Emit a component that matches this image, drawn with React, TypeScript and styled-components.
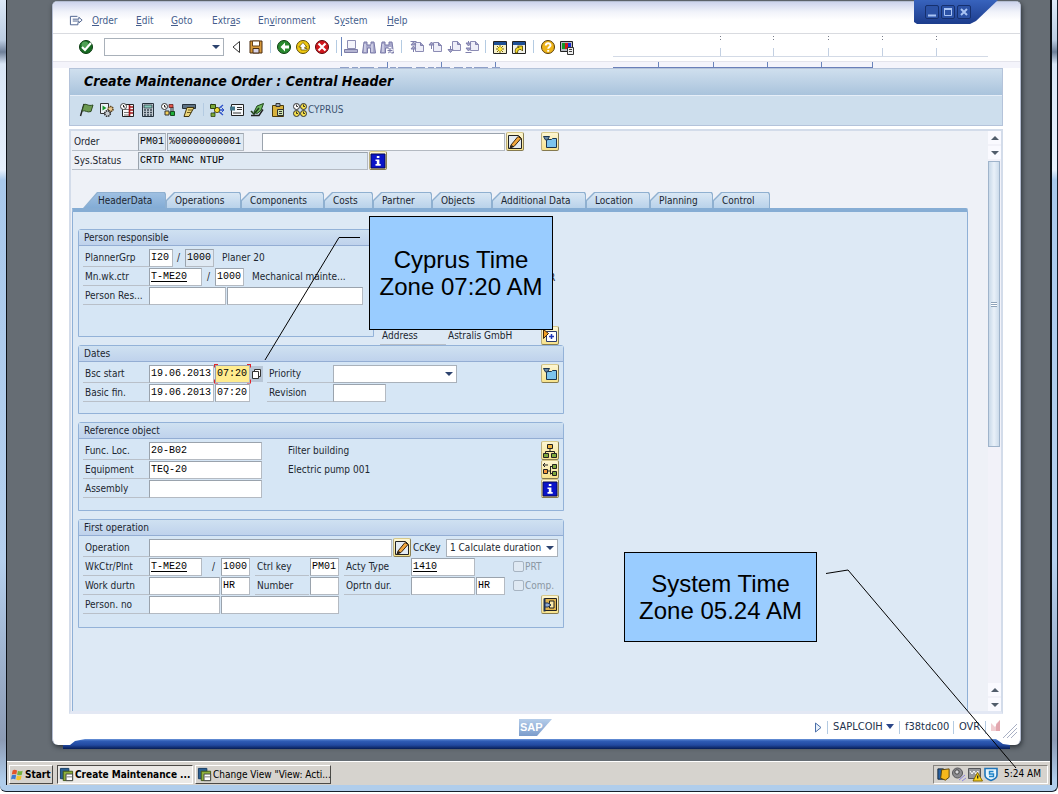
import React from "react";
import styled, { createGlobalStyle, css } from "styled-components";

const UI = '"DejaVu Sans Condensed", "DejaVu Sans", Tahoma, sans-serif';
const MONO = '"Liberation Mono", "Courier New", monospace';

const Global = createGlobalStyle`
  * { box-sizing: border-box; }
  html { background: #fff; }
  body { margin: 0; font-family: ${UI}; font-size: 10px; line-height: 14px; color: #1c2630; }
  button, input, select { font: inherit; color: inherit; margin: 0; border-radius: 0; }
  button { padding: 0; border: 0; background: none; }
  svg { display: block; }
`;

/* ---------- desktop and window frame ---------- */

const Frame = styled.div`
  position: relative;
  display: flex;
  flex-direction: column;
  min-height: calc(100vh - 2px);
  border: solid #16202c;
  border-width: 0 1px 1px 0;
  border-radius: 0 0 6px 6px;
  padding: 0 5px 6px 6px;
  background: linear-gradient(#dce9f8 0, #bccde2 40px, #6e7f98 52px, #d9e6f6 64px, #e6f0fc 170px, #a9c9ec 180px, #b5d0ee 560px, #8c9bb4 740px, #b0cdeb 780px);
`;

const Desktop = styled.div`
  flex: 1;
  display: flex;
  flex-direction: column;
  border: solid #0b1016;
  border-width: 0 2px 0 1px;
  background: #666d74;
`;

const Win = styled.main`
  flex: 1;
  display: flex;
  flex-direction: column;
  position: relative;
  margin: 1px 29px 0 45px;
  padding-bottom: 6px;
  background: #fff;
  border: solid #b4bdd2;
  border-width: 1px 1px 0;
  border-radius: 5px 5px 6px 6px;
  box-shadow: 1px 2px 5px rgba(20, 26, 32, 0.7);
`;

const BlueEdge = styled.div`
  position: relative;
  height: 10px;
  margin: -6px 40px 12px 56px;
  background: linear-gradient(#6d97da 0, #2f5cb6 2px, #2249a0 6px, #071d55 10px);
  clip-path: polygon(0 100%, 0 6px, 7px 6px, 12px 2px, 22px 0, calc(100% - 14px) 0, calc(100% - 7px) 5px, 100% 6px, 100% 100%);
`;

const MenuBar = styled.nav`
  display: flex;
  height: 32px;
  padding: 12px 0 0 16px;
  border-bottom: 1px solid #d9dbe0;
  background: linear-gradient(#cdd3ec 0, #f1f3fa 10px, #fff 18px);
  border-radius: 4px 4px 0 0;
`;

const MenuItem = styled.button<{ $w: number }>`
  width: ${(p) => p.$w}px;
  height: 14px;
  text-align: left;
  color: #455d8c;
`;

const SystemMenu = styled.button`
  width: 23px;
  height: 14px;
`;

const Controls = styled.div`
  position: absolute;
  top: -2px;
  right: 22px;
  width: 84px;
  height: 24px;
  padding: 5px 0 0 11px;
  display: flex;
  gap: 2px;
  background: linear-gradient(#3863bd, #1c3c8c);
  clip-path: polygon(0 0, 100% 0, 62px 21px, 56px 24px, 3px 24px, 0 22px);
`;

const Control = styled.button`
  width: 14px;
  height: 14px;
  border: 1px solid #16306e;
  border-radius: 2px;
  background: #2c52a6;
  color: #a9c4f4;
`;

const Toolbar = styled.div`
  display: flex;
  align-items: center;
  height: 28px;
  padding: 0 0 2px 25px;
  border-bottom: 1px solid #e4e4ec;
`;

const Tool = styled.button<{ $ml?: number }>`
  flex: none;
  width: 16px;
  height: 16px;
  margin-left: ${(p) => p.$ml ?? 2}px;
`;

const Sep = styled.i<{ $ml?: number; $strong?: boolean }>`
  flex: none;
  width: 1px;
  height: ${(p) => (p.$strong ? 19 : 13)}px;
  margin-left: ${(p) => p.$ml ?? 7}px;
  background: ${(p) => (p.$strong ? "#6a84bb" : "#b4cbe2")};
`;

const Ruler = styled.div`
  flex: 1;
  min-width: 0;
  height: 25px;
  margin-left: 8px;
  overflow: hidden;
`;

const Ticks = styled.div`
  height: 6px;
  background: #f4f4fb;
  overflow: hidden;
`;

const Banner = styled.header`
  margin: 0 17px 0 16px;
  border: 1px solid #b4c3da;
  background: #cddeed;
`;

const Title = styled.h1`
  margin: 0;
  height: 27px;
  padding: 3px 0 0 14px;
  border-bottom: 1px solid #e6eef8;
  background: linear-gradient(#cfdfee, #a9c3dc);
  color: #000;
  font-size: 14px;
  line-height: 18px;
  font-weight: bold;
  font-style: italic;
`;

const AppBar = styled.div`
  display: flex;
  align-items: center;
  height: 29px;
  padding: 0 0 2px 6px;
  color: #3d5472;
`;

const Cyprus = styled.button`
  display: flex;
  align-items: center;
  margin-left: 6px;
  height: 16px;
`;

const Content = styled.section`
  flex: 1;
  display: flex;
  margin: 3px 17px 0 16px;
  border: 2px solid #d3dcea;
  border-bottom-width: 3px;
  border-bottom-color: #e3e8f4;
  background: #eef1f7;
`;

const Form = styled.form`
  flex: 1;
  min-width: 0;
  display: flex;
  flex-direction: column;
  padding: 1px 20px 0 1px;
`;

const TabStrip = styled.div`
  display: flex;
  height: 16px;
  margin: 22px 0 0 11px;
`;

const Tab = styled.button<{ $w: number; $on?: boolean }>`
  position: relative;
  width: ${(p) => p.$w}px;
  height: 16px;
  padding: 2px 0 0 ${(p) => (p.$on ? 15 : 9)}px;
  text-align: left;
  white-space: nowrap;
  background: #8fb0d0;
  --shape: ${(p) =>
    p.$on
      ? "polygon(0 100%, 14px 0, calc(100% - 1px) 0, 100% 2px, 100% 100%)"
      : "polygon(0 100%, 0 8px, 8px 0, calc(100% - 1px) 0, 100% 2px, 100% 100%)"};
  clip-path: var(--shape);
  &::before {
    content: "";
    position: absolute;
    inset: 1px 1px 0 1px;
    clip-path: var(--shape);
    background: ${(p) => (p.$on ? "linear-gradient(#9fc0e2, #83acd5)" : "linear-gradient(#d9e7f4, #b9d2ea)")};
  }
  span { position: relative; }
`;

const TabPage = styled.div`
  flex: 1;
  padding: 17px 6px 0 5px;
  border: solid #8fb0d6;
  border-width: 4px 1px 0;
  border-top-color: #86add4;
  border-radius: 0 2px 0 0;
  background: #dde9f5;
`;

const Groups = styled.div`
  display: flex;
  flex-direction: column;
  gap: 8px;
  width: 486px;
`;

const Split = styled.div`
  display: flex;
`;

/* The address line runs on below the group beside it, down to the next group. */
const Aside = styled.div`
  flex: 1;
  display: flex;
  flex-direction: column;
  justify-content: flex-end;
  gap: 39px;
  margin-bottom: -8px;
  padding-right: 5px;
`;

const Group = styled.fieldset<{ $w?: number }>`
  width: ${(p) => (p.$w ? p.$w + "px" : "100%")};
  min-width: 0;
  margin: 0;
  padding: 0;
  border: 1px solid #93b2d8;
  border-radius: 3px 3px 0 0;
  background: #d6e6f5;
`;

const GroupTitle = styled.h2`
  margin: 0;
  height: 16px;
  padding-left: 5px;
  border-bottom: 1px solid #93add3;
  background: linear-gradient(#cfe1f1, #bfd2ec);
  font-size: 10px;
  line-height: 15px;
  font-weight: normal;
`;

const GroupBody = styled.div<{ $bottom: number }>`
  padding: 2px 4px ${(p) => p.$bottom}px;
`;

const Row = styled.div`
  display: flex;
  align-items: center;
  height: 19px;
`;

const Label = styled.label<{ $w: number; $ml?: number; $plain?: boolean }>`
  flex: none;
  width: ${(p) => p.$w}px;
  height: 18px;
  margin-left: ${(p) => p.$ml ?? 0}px;
  padding: 2px 0 0 2px;
  white-space: nowrap;
  border-bottom: 1px solid ${(p) => (p.$plain ? "transparent" : "#b9c0c9")};
`;

const Text = styled.span<{ $ml?: number; $w?: number }>`
  margin-left: ${(p) => p.$ml ?? 0}px;
  ${(p) => p.$w && css`width: ${p.$w}px;`}
  white-space: nowrap;
`;

const Field = styled.input<{ $w: number; $ml?: number; $tone?: "off" | "focus"; $link?: boolean }>`
  flex: none;
  width: ${(p) => p.$w}px;
  height: 18px;
  margin-left: ${(p) => p.$ml ?? 0}px;
  padding: 0 0 0 1px;
  border: 1px solid;
  border-color: #9aa3ad #b4bac2 #b4bac2 #9aa3ad;
  outline: 0;
  font-family: ${MONO};
  color: #000;
  background: ${(p) => (p.$tone === "off" ? "#dfe9f3" : p.$tone === "focus" ? "#ffec8f" : "#fff")};
  text-decoration: ${(p) => (p.$link ? "underline" : "none")};
  text-underline-offset: 2px;
`;

const FocusMark = styled.span`
  position: relative;
  display: flex;
  margin-left: 1px;
  &::before {
    content: "";
    position: absolute;
    inset: -1px;
    border: 1px solid #e0262c;
    clip-path: polygon(0 0, 4px 0, 4px 100%, 0 100%, 0 calc(100% - 4px), 100% calc(100% - 4px), 100% 100%, calc(100% - 4px) 100%, calc(100% - 4px) 0, 100% 0, 100% 4px, 0 4px);
  }
`;

const MatchCode = styled.button`
  width: 13px;
  height: 16px;
  background: #b8c6d6;
`;

const Picker = styled.span<{ $w: number; $ml?: number }>`
  position: relative;
  flex: none;
  width: ${(p) => p.$w}px;
  margin-left: ${(p) => p.$ml ?? 0}px;
  &::after {
    content: "";
    position: absolute;
    right: 4px;
    top: 7px;
    border: 4px solid transparent;
    border-top-color: #2c426e;
    border-bottom: 0;
    pointer-events: none;
  }
  select {
    display: block;
    appearance: none;
    width: 100%;
    height: 18px;
    padding: 0 0 0 3px;
    border: 1px solid #a9b1ba;
    background: #fff;
    outline: 0;
  }
`;

const Push = styled.button<{ $ml?: number; $end?: boolean }>`
  flex: none;
  display: flex;
  align-items: center;
  justify-content: center;
  width: 18px;
  height: 19px;
  margin-left: ${(p) => (p.$end ? "auto" : (p.$ml ?? 1) + "px")};
  border: 1px solid;
  border-color: #d8c98a #8c8154 #857a4e #b9ad7c;
  border-radius: 2px;
  background: linear-gradient(#fdf6d2, #f7e38c);
`;

const Check = styled.label`
  display: flex;
  align-items: center;
  gap: 1px;
  width: 46px;
  margin-left: auto;
  color: #8b97a3;
  input {
    appearance: none;
    width: 11px;
    height: 11px;
    border: 1px solid #a7b4c2;
    border-radius: 2px;
    background: #dfe9f3;
  }
`;

const Scroll = styled.div`
  flex: none;
  display: flex;
  flex-direction: column;
  gap: 2px;
  width: 13px;
  background: #f2f2f9;
`;

const Arrow = styled.button<{ $up?: boolean }>`
  display: flex;
  align-items: center;
  justify-content: center;
  height: 13px;
  background: #fafaff;
  &::before {
    content: "";
    border: 4px solid transparent;
    ${(p) => (p.$up ? "border-bottom-color: #515d6b; border-top: 0;" : "border-top-color: #515d6b; border-bottom: 0;")}
  }
`;

const Track = styled.div`
  flex: 1;
`;

const Thumb = styled.div`
  display: flex;
  align-items: center;
  justify-content: center;
  width: 12px;
  height: 55%;
  border: 1px solid #9fb4cb;
  background: linear-gradient(90deg, #c8d9e9, #e9f1f9, #cddceb);
  &::before {
    content: "";
    width: 6px;
    height: 5px;
    background: repeating-linear-gradient(#8ea3ba 0 1px, #fff 1px 2px);
  }
`;

const Status = styled.footer`
  display: flex;
  align-items: center;
  height: 25px;
  padding: 1px 2px 0 0;
  font-size: 11px;
  color: #22324c;
`;

const StatusText = styled.span<{ $w: number }>`
  width: ${(p) => p.$w}px;
  margin-left: 5px;
  white-space: nowrap;
`;

const Logo = styled.span`
  flex: 1;
  padding-left: 466px;
`;

/* ---------- task bar ---------- */

const TaskBar = styled.div`
  display: flex;
  align-items: center;
  height: 24px;
  padding: 2px 2px 1px;
  border-top: 1px solid #fff;
  background: #d6d3ce;
  color: #000;
`;

const Task = styled.button<{ $w: number; $ml?: number; $down?: boolean }>`
  display: flex;
  align-items: center;
  flex: none;
  gap: 1px;
  width: ${(p) => p.$w}px;
  height: 19px;
  margin-left: ${(p) => p.$ml ?? 0}px;
  padding: 1px 0 0 1px;
  white-space: nowrap;
  border: 1px solid;
  border-color: ${(p) => (p.$down ? "#4c4a47 #fff #fff #4c4a47" : "#fff #4c4a47 #4c4a47 #fff")};
  background: ${(p) => (p.$down ? "#ebe9e6" : "#d6d3ce")};
  svg { flex: none; }
`;

const Tray = styled.div`
  display: flex;
  align-items: center;
  width: 115px;
  height: 19px;
  margin-left: auto;
  padding-left: 2px;
  border: 1px solid;
  border-color: #87847f #fff #fff #87847f;
`;

/* ---------- annotations laid over the desktop ---------- */

const Note = styled.aside<{ $x: number; $y: number; $w: number; $h: number }>`
  position: absolute;
  left: ${(p) => p.$x}px;
  top: ${(p) => p.$y}px;
  width: ${(p) => p.$w}px;
  height: ${(p) => p.$h}px;
  display: flex;
  align-items: center;
  justify-content: center;
  border: 1px solid #000;
  background: #99ccff;
  color: #000;
  font: 24px/27px "Liberation Sans", Arial, sans-serif;
  text-align: center;
`;

const Leaders = styled.svg`
  position: absolute;
  left: 0;
  top: 0;
  pointer-events: none;
`;

/* ---------- icons ---------- */

const art: Record<string, React.ReactNode> = {
  menu: <><path d="M9 2.500H1.500v9h8V9" fill="none" stroke="#4a5f8c" /><path d="M4 5.500h6.500v-2L14 6.500l-3.500 3v-2H4" fill="#fff" stroke="#4a5f8c" /></>,
  ok: <><circle cx="8" cy="8" r="6.500" fill="#176b22" stroke="#0a3a10" /><circle cx="7" cy="6" r="3.500" fill="#4fa055" /><path d="M4 8l3 3 6-7" fill="none" stroke="#fff" strokeWidth="2.200" /></>,
  save: <><path d="M2 2h12v12H2z" fill="#d99a3a" stroke="#4a2c10" /><path d="M4.500 2v5h7V2z" fill="#fff" stroke="#6b4218" /><path d="M5 9.500h6V14H5z" fill="#d8d4e8" stroke="#4a2c10" /></>,
  back: <><circle cx="8" cy="8" r="6.500" fill="#2a8a2f" stroke="#0b3c10" /><path d="M9 3.500L4.500 8 9 12.500V9.500h4v-3H9z" fill="#fff" /></>,
  exit: <><circle cx="8" cy="8" r="6.500" fill="#f0c810" stroke="#5c4a04" /><path d="M8 3.500L3.800 8H6v3h6V9.500H9.800V8h2z" fill="#fff" stroke="#6b5806" strokeWidth=".8" /></>,
  cancel: <><circle cx="8" cy="8" r="6.500" fill="#d0161c" stroke="#5c0609" /><path d="M4.500 4.500l7 7M11.500 4.500l-7 7" stroke="#fff" strokeWidth="2.200" /></>,
  print: <><path d="M4.500 1.500h8v8h-8z" fill="#f4f4fb" stroke="#8f8fb4" /><path d="M1.500 10.500h13v3h-13z" fill="#b4b4d2" stroke="#7d7da6" /></>,
  find: <><path d="M3 3h3v3h4V3h3l1.500 11H9.500v-5h-3v5h-5z" fill="#a9a9cc" stroke="#7a7aa8" /><path d="M4 5v8M11 5v8" stroke="#ececf8" /></>,
  findNext: <><path d="M3 3h3v3h4V3h3l1.500 11H9.500v-5h-3v5h-5z" fill="#a9a9cc" stroke="#7a7aa8" /><path d="M4 5v8" stroke="#ececf8" /><path d="M11 8v7M7.500 11.500h7" stroke="#fff" strokeWidth="2.600" /><path d="M11 9v5M8.500 11.500h5" stroke="#7a7aa8" strokeWidth="1.200" /></>,
  first: <><path d="M6.500 3.500h5l3 3v6h-8z" fill="#eeeef8" stroke="#8c8cb4" /><path d="M11.500 3.500v3h3M1.500 2.500h6M4.500 3L2 6h5zM4.500 7L2 10h5zM4.500 10v3" fill="#a4a4c8" stroke="#7f7fac" /></>,
  up: <><path d="M6.500 3.500h5l3 3v6h-8z" fill="#eeeef8" stroke="#8c8cb4" /><path d="M11.500 3.500v3h3M4.500 3L2 6h5zM4.500 6v4" fill="#a4a4c8" stroke="#7f7fac" /></>,
  down: <><path d="M6.500 2.500h5l3 3v6h-8z" fill="#eeeef8" stroke="#8c8cb4" /><path d="M11.500 2.500v3h3M4.500 13.500L2 10.500h5zM4.500 7v4" fill="#a4a4c8" stroke="#7f7fac" /></>,
  last: <><path d="M6.500 2.500h5l3 3v6h-8z" fill="#eeeef8" stroke="#8c8cb4" /><path d="M11.500 2.500v3h3M1.500 13.500h6M4.500 7L2 4h5zM4.500 12L2 9h5zM4.500 2v2" fill="#a4a4c8" stroke="#7f7fac" /></>,
  session: <><path d="M1.500 2.500h13v12h-13z" fill="#f5f0c8" stroke="#222" /><path d="M2 3h12v3H2z" fill="#1d4f96" /><path d="M8 6v8M4 10h8M5 7l6 6M11 7l-6 6" stroke="#7a6400" /><circle cx="8" cy="10" r="2" fill="#ffe92e" /></>,
  shortcut: <><path d="M1.500 2.500h13v12h-13z" fill="#f1f1ea" stroke="#222" /><path d="M2 3h12v3H2z" fill="#1d4f96" /><path d="M4.500 14c-1-4 1-6 3.500-5.500L6.500 7h5v5l-1.500-1.500C8 10 6.500 11 6.500 14z" fill="#f6dc20" stroke="#4a3c00" strokeWidth=".8" /></>,
  help: <><circle cx="8" cy="8" r="6.500" fill="#eeb41a" stroke="#5a3d06" /><path d="M5.800 6.500C5.800 3.500 10.500 3.500 10.500 6.200 10.500 8 8.200 8 8.200 9.800M8.200 11v1.800" fill="none" stroke="#fff" strokeWidth="2" /></>,
  layout: <><path d="M1.500 2.500h12v10h-12z" fill="#b8bcc4" stroke="#222" /><path d="M3 4h3v6H3z" fill="#119a26" /><path d="M6 4h3v6H6z" fill="#d01818" /><path d="M9 4h3v6H9z" fill="#1a2fd0" /><path d="M8.500 8.500h6v7h-6z" fill="#eee" stroke="#333" /><path d="M10 10.500h3M10 12.500h3" stroke="#444" /></>,
  flag: <><path d="M5 2L1.500 14" stroke="#222" strokeWidth="1.400" /><path d="M5 2.500c3-1 4 2 9 .5l-2 6.500c-4 1.500-5-1.500-9-.5z" fill="#6c9a52" stroke="#2e4c22" /></>,
  gears: <><path d="M1.500 1.500h8v10h-8z" fill="#eef2f6" stroke="#333" /><path d="M3.500 3.500l4 2.500-4 2.500z" fill="#189a2c" /><circle cx="11.500" cy="7" r="2.500" fill="#e8c890" stroke="#5c4420" strokeDasharray="1.500 .7" strokeWidth="1.600" /><circle cx="8.500" cy="11.500" r="2.800" fill="#c9cdd2" stroke="#333" strokeDasharray="1.500 .7" strokeWidth="1.600" /></>,
  schedule: <><path d="M3.500 2.500h11v12h-11z" fill="#f8f8f8" stroke="#222" /><path d="M5 7.500h5M5 10.500h5M5 13h5" stroke="#777" /><path d="M10.500 3v11M11 5h3M11 8h3M11 11h3" stroke="#a01418" strokeWidth="1.600" /><circle cx="4.500" cy="4.500" r="3" fill="#fff" stroke="#444" /><path d="M4.500 3v2H6" fill="none" stroke="#222" /></>,
  calc: <><path d="M2.500 1.500h11v13h-11z" fill="#c3ccd4" stroke="#26323c" /><path d="M4 3h8v3H4z" fill="#86c8b8" stroke="#26323c" strokeWidth=".7" /><path d="M4 8h8M4 10.500h8M4 13h8" stroke="#3c4854" strokeWidth="1.500" strokeDasharray="2 1" /></>,
  network: <><circle cx="4.500" cy="4.500" r="3" fill="#fff" stroke="#333" /><path d="M4.500 3v2H6" fill="none" stroke="#222" /><path d="M5 9h4v4H5z" fill="#f2cf5a" stroke="#333" /><path d="M9 11h2V5h2v4" fill="none" stroke="#333" /><path d="M10.500 9.500h4v4h-4z" fill="#1eae3a" stroke="#164c20" /><path d="M9 2.500h4v3H9z" fill="#e4574c" stroke="#5a1410" strokeWidth=".7" /></>,
  material: <><path d="M1.500 2.500h13v4h-13z" fill="#5d7284" stroke="#26323c" /><path d="M6 5.500h7l-5 9H3z" fill="#ecd57a" stroke="#3f3410" /><path d="M7 8h4M6 10.500h4" stroke="#6b5a1c" /></>,
  spread: <><path d="M2 2l5 4M14 3L8 8M14 13L8 8M3 13l5-5M8 8h7" stroke="#2c50c8" strokeWidth="1.300" /><path d="M12.500 5.500l2.500 2.500-2.500 2.500" fill="none" stroke="#2c50c8" /><circle cx="8" cy="8" r="2.600" fill="#eedc3a" stroke="#5c5208" /><path d="M1.500 2.500h5v4h-5z" fill="#7aa838" stroke="#2e4410" /><path d="M2 11h4v3.500H2z" fill="#7aa838" stroke="#2e4410" strokeWidth=".8" /></>,
  text: <><path d="M2.500 2.500h12v11h-12z" fill="#f6f8fa" stroke="#222" /><path d="M8 5.500h5M8 7.500h5M4 11h8" stroke="#333" /><path d="M1 4.500h5v4H1z" fill="#3f7488" /></>,
  release: <><path d="M2 13.500h8l4-6" fill="none" stroke="#222" strokeWidth="1.400" /><path d="M5 10l3-6 6.500-2.500-2.500 7-4 3z" fill="#6fb860" stroke="#1c4416" /><path d="M2 9l3 3 5-6" fill="none" stroke="#1f3f18" strokeWidth="1.600" /></>,
  clip: <><path d="M2.500 3.500h11v11h-11z" fill="#d8b23c" stroke="#4a3a0a" /><path d="M6 1.500h4v3H6z" fill="#9aa6b0" stroke="#333" /><path d="M7.500 7.500h6v6h-6z" fill="#cfe4b0" stroke="#333" /><path d="M9 9.500h3M9 11.500h3" stroke="#333" /></>,
  clocks: <>{[[4.5, 4.5], [11.5, 4.5], [4.5, 11.5], [11.5, 11.5]].map(([x, y], i) => <g key={i}><circle cx={x} cy={y} r="3" fill={i ? "#f6e04a" : "#fff"} stroke="#333" /><path d={`M${x} ${y - 2}v2h1.500`} fill="none" stroke="#222" strokeWidth=".9" /></g>)}</>,
  edit: <><path d="M1.500 1.500h10l3 3v10h-13z" fill="#e3ebf2" stroke="#222" /><path d="M4 11L11 2.500l3 2L7 12.500l-4 1.500z" fill="#f0a63c" stroke="#3c2508" /><path d="M3 14l1.500-3L7 12.500z" fill="#222" /></>,
  detail: <><path d="M4.500 5.500h5l1-1h4v9h-10z" fill="#7cc4ee" stroke="#1c3550" /><path d="M1.500 2.500h6L5.500 6h-2z" fill="#6b8aa8" stroke="#1c3550" /></>,
  info: <><path d="M1 1h14v14H1z" fill="#0b14c8" stroke="#05085c" /><path d="M6.800 3h2.600v2H6.800zM5.500 6.500h3.900V11h1.300v1.700H5.500V11h1.300V8H5.500z" fill="#fff" /></>,
  address: <><path d="M4.500 3.500h10v10h-10z" fill="#fff" stroke="#2c3c6c" /><path d="M9.500 6v5M7 8.500h5" stroke="#2038b8" strokeWidth="1.500" /><path d="M1.500 1.500v9l5-5z" fill="#f2a024" stroke="#402604" /></>,
  tree: <><path d="M8 6v3M3.500 11V8.500h9V11" fill="none" stroke="#222" /><path d="M5.500 1.500h5v4h-5z" fill="#f0b43c" stroke="#222" /><path d="M1.500 10.500h5v4h-5zM9.500 10.500h5v4h-5z" fill="#7da83c" stroke="#222" /></>,
  branch: <><path d="M6 9h2.500M8.500 4v8.500M8.500 4.500h2M8.500 11.500h2M1 3h5M3 1L1 3l2 2" fill="none" stroke="#222" /><path d="M1.500 7.500h4v4h-4z" fill="#f0943c" stroke="#222" /><path d="M10.500 2.500h4v4h-4zM10.500 9.500h4v4h-4z" fill="#7da83c" stroke="#222" /></>,
  person: <><path d="M2.500 1.500h12v12h-12z" fill="#e0b450" stroke="#222" /><path d="M7.500 4h4.500v7H7.500z" fill="#fbeaa8" stroke="#222" /><path d="M2.500 1.500v13" stroke="#1f3050" strokeWidth="2" /><path d="M3 6h3l3 2-3 2H3z" fill="#8fa9d4" stroke="#1f3050" /></>,
  sap: <><path d="M1.500 1.500h9v11h-9z" fill="#2b5f94" stroke="#123a62" /><path d="M4.500 4.500h10v10h-10z" fill="#8eb03c" stroke="#3f5414" /><path d="M7.500 7.500h7v7h-7z" fill="#fff" stroke="#444" /><path d="M8 10.500h6" stroke="#777" /></>,
  windows: <><path d="M2 3c2-1.500 3.500-1 5.500 0l-1 5C4.500 7 3 7 1 8z" fill="#e2552a" /><path d="M8.500 3.300c2 1 3.500 1 5.800 0l-1 5c-2 1-4 1-5.800 0z" fill="#73b13c" /><path d="M1 9c2-1 3.500-1 5.300 0l-1 5c-2-1-3.500-1-5.300 0z" fill="#3c78d0" /><path d="M7.300 9.300c2 1 3.500 1 5.800 0l-1 5c-2 1-4 1-5.800 0z" fill="#f2c42c" /></>,
  trayA: <><path d="M2 2h6v11H2z" fill="#2a62a4" stroke="#123" /><path d="M6 3l8-1v9l-4 3-5-2z" fill="#f6b81c" stroke="#5c4204" /></>,
  trayB: <><circle cx="6.500" cy="7" r="5" fill="#8c8c90" stroke="#55555a" /><circle cx="6" cy="6" r="2.200" fill="#d6d6da" stroke="#444" /><path d="M8 14l6-5M11 15l4-3" stroke="#8a84e0" /></>,
  trayC: <><path d="M1.500 2.500h12v10h-12z" fill="#96989c" stroke="#55575c" /><path d="M3 5l2 3 2-3 2 3 2-3v3" fill="none" stroke="#fff" /><path d="M10.500 6.500l5 8.500H6z" fill="#f8d41c" stroke="#8a6a00" /><path d="M10.700 9.500v3" stroke="#222" strokeWidth="1.300" /></>,
  trayD: <><path d="M2 2.500h12V9c0 3-3 4.500-6 5.500C5 13.500 2 12 2 9z" fill="#e6f4fc" stroke="#1f74b8" strokeWidth="1.600" /><path d="M10.500 5.500H6.500v2.500h4v2.500H6" fill="none" stroke="#1f84c8" strokeWidth="1.400" /></>,
};

const Icon = ({ name, size = 16 }: { name: string; size?: number }) => (
  <svg width={size} height={size} viewBox="0 0 16 16" aria-hidden="true">{art[name]}</svg>
);

const MENUS: [string, string, string, number][] = [
  ["", "O", "rder", 44], ["", "E", "dit", 35], ["", "G", "oto", 41], ["Extr", "a", "s", 46],
  ["En", "v", "ironment", 76], ["S", "y", "stem", 53], ["", "H", "elp", 40],
];

const TABS: [string, number][] = [
  ["HeaderData", 83], ["Operations", 75], ["Components", 83], ["Costs", 49], ["Partner", 59],
  ["Objects", 60], ["Additional Data", 94], ["Location", 64], ["Planning", 63], ["Control", 57],
];

export default function App() {
  return (
    <Frame>
      <Global />
      <Desktop>
        <Win>
          <MenuBar>
            <SystemMenu aria-label="Window menu"><Icon name="menu" size={15} /></SystemMenu>
            {MENUS.map(([a, key, b, w]) => (
              <MenuItem key={key + b} $w={w}>{a}<u>{key}</u>{b}</MenuItem>
            ))}
          </MenuBar>
          <Controls>
            <Control aria-label="Minimize"><svg width="12" height="12"><path d="M2 9.500h8" stroke="currentColor" strokeWidth="2" /></svg></Control>
            <Control aria-label="Maximize"><svg width="12" height="12"><path d="M2.500 3v6.500h7V3M2 3h8" fill="none" stroke="currentColor" /><path d="M2 3h8" stroke="currentColor" strokeWidth="2" /></svg></Control>
            <Control aria-label="Close"><svg width="12" height="12"><path d="M3 3l6 6M9 3L3 9" stroke="currentColor" strokeWidth="2" /></svg></Control>
          </Controls>

          <Toolbar>
            <Tool $ml={0} aria-label="Enter"><Icon name="ok" /></Tool>
            <Picker $w={120} $ml={10}><select aria-label="Command"><option /></select></Picker>
            <Tool $ml={5} aria-label="Previous"><svg width="16" height="16"><path d="M10.500 2.500v11L4 8z" fill="#fff" stroke="#333" /></svg></Tool>
            <Tool $ml={3} aria-label="Save"><Icon name="save" /></Tool>
            <Sep $ml={6} />
            <Tool $ml={5} aria-label="Back"><Icon name="back" /></Tool>
            <Tool $ml={3} aria-label="Exit"><Icon name="exit" /></Tool>
            <Tool $ml={3} aria-label="Cancel"><Icon name="cancel" /></Tool>
            <Sep $ml={6} />
            <Sep $ml={4} $strong />
            <Tool $ml={1} aria-label="Print"><Icon name="print" /></Tool>
            <Tool $ml={2} aria-label="Find"><Icon name="find" /></Tool>
            <Tool aria-label="Find next"><Icon name="findNext" /></Tool>
            <Sep $ml={6} />
            <Tool $ml={7} aria-label="First page"><Icon name="first" /></Tool>
            <Tool aria-label="Previous page"><Icon name="up" /></Tool>
            <Tool $ml={3} aria-label="Next page"><Icon name="down" /></Tool>
            <Tool aria-label="Last page"><Icon name="last" /></Tool>
            <Sep $ml={5} />
            <Tool $ml={6} aria-label="New session"><Icon name="session" /></Tool>
            <Tool $ml={3} aria-label="Create shortcut"><Icon name="shortcut" /></Tool>
            <Sep $ml={6} />
            <Tool $ml={6} aria-label="Help"><Icon name="help" /></Tool>
            <Tool $ml={3} aria-label="Layout"><Icon name="layout" /></Tool>
            <Ruler>
              <svg width="420" height="25" aria-hidden="true">
                <path d="M30 22.500h375" stroke="#d3dae6" />
                <path d="M137.500 2v4M190.500 2v4M245.500 2v4M299.500 2v4M353.500 2v4" stroke="#777b88" strokeDasharray="1 2" />
                <path d="M137.500 14v8M190.500 14v8M245.500 14v8M299.500 14v8M353.500 14v8" stroke="#c3d0e2" />
              </svg>
            </Ruler>
          </Toolbar>
          <Ticks>
            <svg width="900" height="6" aria-hidden="true">
              <path d="M334.500 0v6M388.500 0v6M442.500 0v6M605.500 0v6M660.500 0v6M714.500 0v6M768.500 0v6M819.500 0v6" stroke="#6a84bb" />
              <path d="M287 5.500h160" stroke="#8fa0c8" strokeDasharray="9 3 6 2 14 4" />
              <path d="M560 5.500h260" stroke="#6a7fb8" />
            </svg>
          </Ticks>

          <Banner>
            <Title>Create Maintenance Order : Central Header</Title>
            <AppBar>
              {["flag", "gears", "schedule", "calc", "network", "material"].map((n) => (
                <Tool key={n} $ml={n === "flag" ? 3 : n === "calc" || n === "material" ? 5 : 4} aria-label={n}><Icon name={n} /></Tool>
              ))}
              <Sep $ml={6} />
              {["spread", "text", "release", "clip"].map((n) => (
                <Tool key={n} $ml={n === "clip" ? 5 : n === "spread" ? 5 : 4} aria-label={n}><Icon name={n} /></Tool>
              ))}
              <Cyprus><Icon name="clocks" />CYPRUS</Cyprus>
            </AppBar>
          </Banner>

          <Content>
            <Form onSubmit={(e) => e.preventDefault()}>
              <Row>
                <Label $w={66} htmlFor="order">Order</Label>
                <Field id="order" $w={28} $tone="off" readOnly value="PM01" />
                <Field aria-label="Order number" $w={77} $ml={1} $tone="off" readOnly value="%00000000001" />
                <Field aria-label="Order text" $w={243} $ml={18} />
                <Push type="button" aria-label="Long text"><Icon name="edit" /></Push>
                <Push type="button" $ml={17} aria-label="Order details"><Icon name="detail" /></Push>
              </Row>
              <Row>
                <Label $w={66} htmlFor="status">Sys.Status</Label>
                <Field id="status" $w={230} $tone="off" readOnly value="CRTD MANC NTUP" />
                <Push type="button" aria-label="Status information"><Icon name="info" /></Push>
              </Row>

              <TabStrip role="tablist">
                {TABS.map(([name, w], i) => (
                  <Tab key={name} type="button" role="tab" aria-selected={i === 0} $w={w} $on={i === 0}><span>{name}</span></Tab>
                ))}
              </TabStrip>
              <TabPage>
                <Groups>
                  <Split>
                    <Group $w={296}>
                      <GroupTitle>Person responsible</GroupTitle>
                      <GroupBody $bottom={31}>
                        <Row>
                          <Label $w={66} htmlFor="planner">PlannerGrp</Label>
                          <Field id="planner" $w={24} defaultValue="I20" />
                          <Text $ml={4}>/</Text>
                          <Field aria-label="Planning plant" $w={29} $ml={5} $tone="off" readOnly value="1000" />
                          <Text $ml={8}>Planer 20</Text>
                        </Row>
                        <Row>
                          <Label $w={66} htmlFor="workctr">Mn.wk.ctr</Label>
                          <Field id="workctr" $w={53} $link defaultValue="T-ME20" />
                          <Text $ml={5}>/</Text>
                          <Field aria-label="Work center plant" $w={29} $ml={5} defaultValue="1000" />
                          <Text $ml={8}>Mechanical mainte...</Text>
                        </Row>
                        <Row>
                          <Label $w={66} htmlFor="person">Person Res...</Label>
                          <Field id="person" $w={77} />
                          <Field aria-label="Person name" $w={136} $ml={1} />
                        </Row>
                      </GroupBody>
                    </Group>
                    <Aside>
                      <Row><Text $ml={175}>R</Text></Row>
                      <Row>
                        <Label as="span" $w={66} $ml={6}>Address</Label>
                        <Text $ml={2}>Astralis GmbH</Text>
                        <Push type="button" $end aria-label="Address details"><Icon name="address" /></Push>
                      </Row>
                    </Aside>
                  </Split>

                  <Group>
                    <GroupTitle>Dates</GroupTitle>
                    <GroupBody $bottom={11}>
                      <Row>
                        <Label $w={66} htmlFor="start">Bsc start</Label>
                        <Field id="start" $w={65} defaultValue="19.06.2013" />
                        <FocusMark><Field aria-label="Start time" $w={35} $tone="focus" defaultValue="07:20" /></FocusMark>
                        <MatchCode type="button" aria-label="Choose time"><svg width="13" height="16"><path d="M4.500 5.500v-2h6v7h-2" fill="#fff" stroke="#333" /><path d="M2.500 5.500h6v7h-6z" fill="#fff" stroke="#333" /></svg></MatchCode>
                        <Label $w={66} $ml={4} htmlFor="priority">Priority</Label>
                        <Picker $w={124}><select id="priority"><option /></select></Picker>
                        <Push type="button" $end aria-label="Date details"><Icon name="detail" /></Push>
                      </Row>
                      <Row>
                        <Label $w={66} htmlFor="finish">Basic fin.</Label>
                        <Field id="finish" $w={65} defaultValue="19.06.2013" />
                        <Field aria-label="Finish time" $w={35} $ml={1} defaultValue="07:20" />
                        <Label $w={66} $ml={17} htmlFor="revision">Revision</Label>
                        <Field id="revision" $w={53} />
                      </Row>
                    </GroupBody>
                  </Group>

                  <Group>
                    <GroupTitle>Reference object</GroupTitle>
                    <GroupBody $bottom={12}>
                      <Row>
                        <Label $w={66} htmlFor="floc">Func. Loc.</Label>
                        <Field id="floc" $w={113} defaultValue="20-B02" />
                        <Text $ml={26}>Filter building</Text>
                        <Push type="button" $end aria-label="Structure"><Icon name="tree" /></Push>
                      </Row>
                      <Row>
                        <Label $w={66} htmlFor="equip">Equipment</Label>
                        <Field id="equip" $w={113} defaultValue="TEQ-20" />
                        <Text $ml={26}>Electric pump 001</Text>
                        <Push type="button" $end aria-label="Hierarchy"><Icon name="branch" /></Push>
                      </Row>
                      <Row>
                        <Label $w={66} htmlFor="assembly">Assembly</Label>
                        <Field id="assembly" $w={113} />
                        <Push type="button" $end aria-label="Object information"><Icon name="info" /></Push>
                      </Row>
                    </GroupBody>
                  </Group>

                  <Group>
                    <GroupTitle>First operation</GroupTitle>
                    <GroupBody $bottom={13}>
                      <Row>
                        <Label $w={66} htmlFor="operation">Operation</Label>
                        <Field id="operation" $w={243} />
                        <Push type="button" aria-label="Operation text"><Icon name="edit" /></Push>
                        <Label $w={35} $plain htmlFor="cckey">CcKey</Label>
                        <Picker $w={112}><select id="cckey"><option>1 Calculate duration</option></select></Picker>
                      </Row>
                      <Row>
                        <Label $w={66} htmlFor="wkctr">WkCtr/Plnt</Label>
                        <Field id="wkctr" $w={53} $link defaultValue="T-ME20" />
                        <Text $ml={10} $w={7}>/</Text>
                        <Field aria-label="Plant" $w={29} $ml={2} defaultValue="1000" />
                        <Label $w={54} $ml={5} htmlFor="ctrl">Ctrl key</Label>
                        <Field id="ctrl" $w={29} $ml={1} defaultValue="PM01" />
                        <Label $w={66} $ml={5} htmlFor="acty">Acty Type</Label>
                        <Field id="acty" $w={64} $ml={1} $link defaultValue="1410" />
                        <Check><input type="checkbox" disabled />PRT</Check>
                      </Row>
                      <Row>
                        <Label $w={66} htmlFor="work">Work durtn</Label>
                        <Field id="work" $w={71} />
                        <Field aria-label="Work unit" $w={29} $ml={1} defaultValue="HR" />
                        <Label $w={54} $ml={5} htmlFor="number">Number</Label>
                        <Field id="number" $w={29} $ml={1} />
                        <Label $w={66} $ml={5} htmlFor="dur">Oprtn dur.</Label>
                        <Field id="dur" $w={64} $ml={1} />
                        <Field aria-label="Duration unit" $w={29} $ml={1} defaultValue="HR" />
                        <Check><input type="checkbox" disabled />Comp.</Check>
                      </Row>
                      <Row>
                        <Label $w={66} htmlFor="persno">Person. no</Label>
                        <Field id="persno" $w={71} />
                        <Field aria-label="Personnel name" $w={118} $ml={1} />
                        <Push type="button" $end aria-label="Operation details"><Icon name="person" /></Push>
                      </Row>
                    </GroupBody>
                  </Group>
                </Groups>
              </TabPage>
            </Form>
            <Scroll>
              <Arrow $up aria-label="Scroll up" />
              <Arrow aria-label="Scroll down" />
              <Track><Thumb /></Track>
              <Arrow $up aria-label="Line up" />
              <Arrow aria-label="Line down" />
            </Scroll>
          </Content>

          <Status>
            <Logo>
              <svg width="34" height="17" viewBox="0 0 34 17" role="img" aria-label="SAP">
                <defs><linearGradient id="g" x1="0" y1="0" x2="0" y2="1"><stop offset="0" stopColor="#b5cdea" /><stop offset="1" stopColor="#7b9ccb" /></linearGradient></defs>
                <path d="M0 0h33L18 17H0z" fill="url(#g)" />
                <text x="1" y="12" fontFamily="Liberation Sans, Arial, sans-serif" fontWeight="bold" fontSize="11" fill="#fff">SAP</text>
              </svg>
            </Logo>
            <svg width="9" height="11"><path d="M1.500 1v9L7 5.500z" fill="#e8f1fb" stroke="#4a6ea8" /></svg>
            <Sep $ml={4} />
            <StatusText $w={51}>SAPLCOIH</StatusText>
            <svg width="12" height="6"><path d="M2 0h8L6 5z" fill="#2b4688" /></svg>
            <Sep $ml={3} />
            <StatusText $w={45}>f38tdc00</StatusText>
            <Sep $ml={3} />
            <StatusText $w={23}>OVR</StatusText>
            <Sep $ml={3} />
            <svg width="32" height="24" aria-hidden="true">
              <path d="M5 16V8l4 4 5-7v11z" fill="#f0cdd1" /><path d="M10 16V9l4-4v11z" fill="#d98c96" opacity=".6" />
              <path d="M17 23L31 9M21 23l10-10M25 23l6-6" stroke="#a9b0c4" />
            </svg>
          </Status>
        </Win>
        <BlueEdge />
        <TaskBar>
          <Task $w={44}><Icon name="windows" size={13} /><b>Start</b></Task>
          <Task $w={136} $ml={4} $down><Icon name="sap" size={15} /><b>Create Maintenance ...</b></Task>
          <Task $w={136} $ml={2}><Icon name="sap" size={15} />Change View "View: Acti...</Task>
          <Tray>
            <Icon name="trayA" size={15} /><Icon name="trayB" /><Icon name="trayC" /><Icon name="trayD" />
            <Text $ml={5}>5:24 AM</Text>
          </Tray>
        </TaskBar>
      </Desktop>

      <Note $x={369} $y={216} $w={184} $h={114}>Cyprus Time<br />Zone 07:20 AM</Note>
      <Note $x={624} $y={552} $w={193} $h={90}>System Time<br />Zone 05.24 AM</Note>
      <Leaders width="1058" height="792" aria-hidden="true">
        <path d="M360 237.500H339L265 360M826 573.500L848 570l168 198" fill="none" stroke="#000" />
      </Leaders>
    </Frame>
  );
}
